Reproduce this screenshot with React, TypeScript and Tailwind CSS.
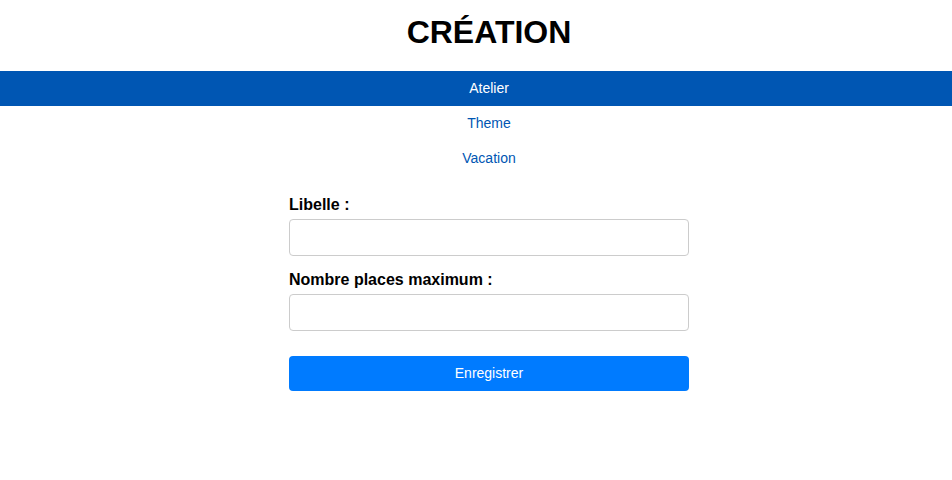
export default function App() {
  const links = ["Atelier", "Theme", "Vacation"];

  return (
    <div className="min-h-[480px] bg-white font-['Liberation_Sans',Arial,sans-serif] text-black">
      <h1 className="pl-[26px] pt-[14px] pb-[20px] text-center text-[32px] font-bold leading-[37px]">CRÉATION</h1>

      <nav className="flex flex-col">
        {links.map((l, i) => (
          <a
            key={l}
            href="#"
            className={
              i === 0
                ? "flex h-[35px] items-center justify-center bg-[#0056b3] pb-[2px] pl-[26px] text-sm text-white"
                : "flex h-[35px] items-center justify-center pb-[2px] pl-[26px] text-sm text-[#0056b3]"
            }
          >
            {l}
          </a>
        ))}
      </nav>

      <div className="pl-[26px]">
        <form className="mx-auto mt-[20px] flex w-[400px] flex-col">
          <label className="text-base font-bold leading-[18px]">Libelle :</label>
          <input
            type="text"
            className="mt-[5px] h-[37px] w-full rounded border border-[#ccc] px-2 text-base"
          />
          <label className="mt-[15px] text-base font-bold leading-[18px]">Nombre places maximum :</label>
          <input
            type="text"
            className="mt-[5px] h-[37px] w-full rounded border border-[#ccc] px-2 text-base"
          />
          <button
            type="button"
            className="mt-[25px] h-[35px] w-full rounded bg-[#007bff] pb-[2px] text-sm text-white"
          >
            Enregistrer
          </button>
        </form>
      </div>
    </div>
  );
}
